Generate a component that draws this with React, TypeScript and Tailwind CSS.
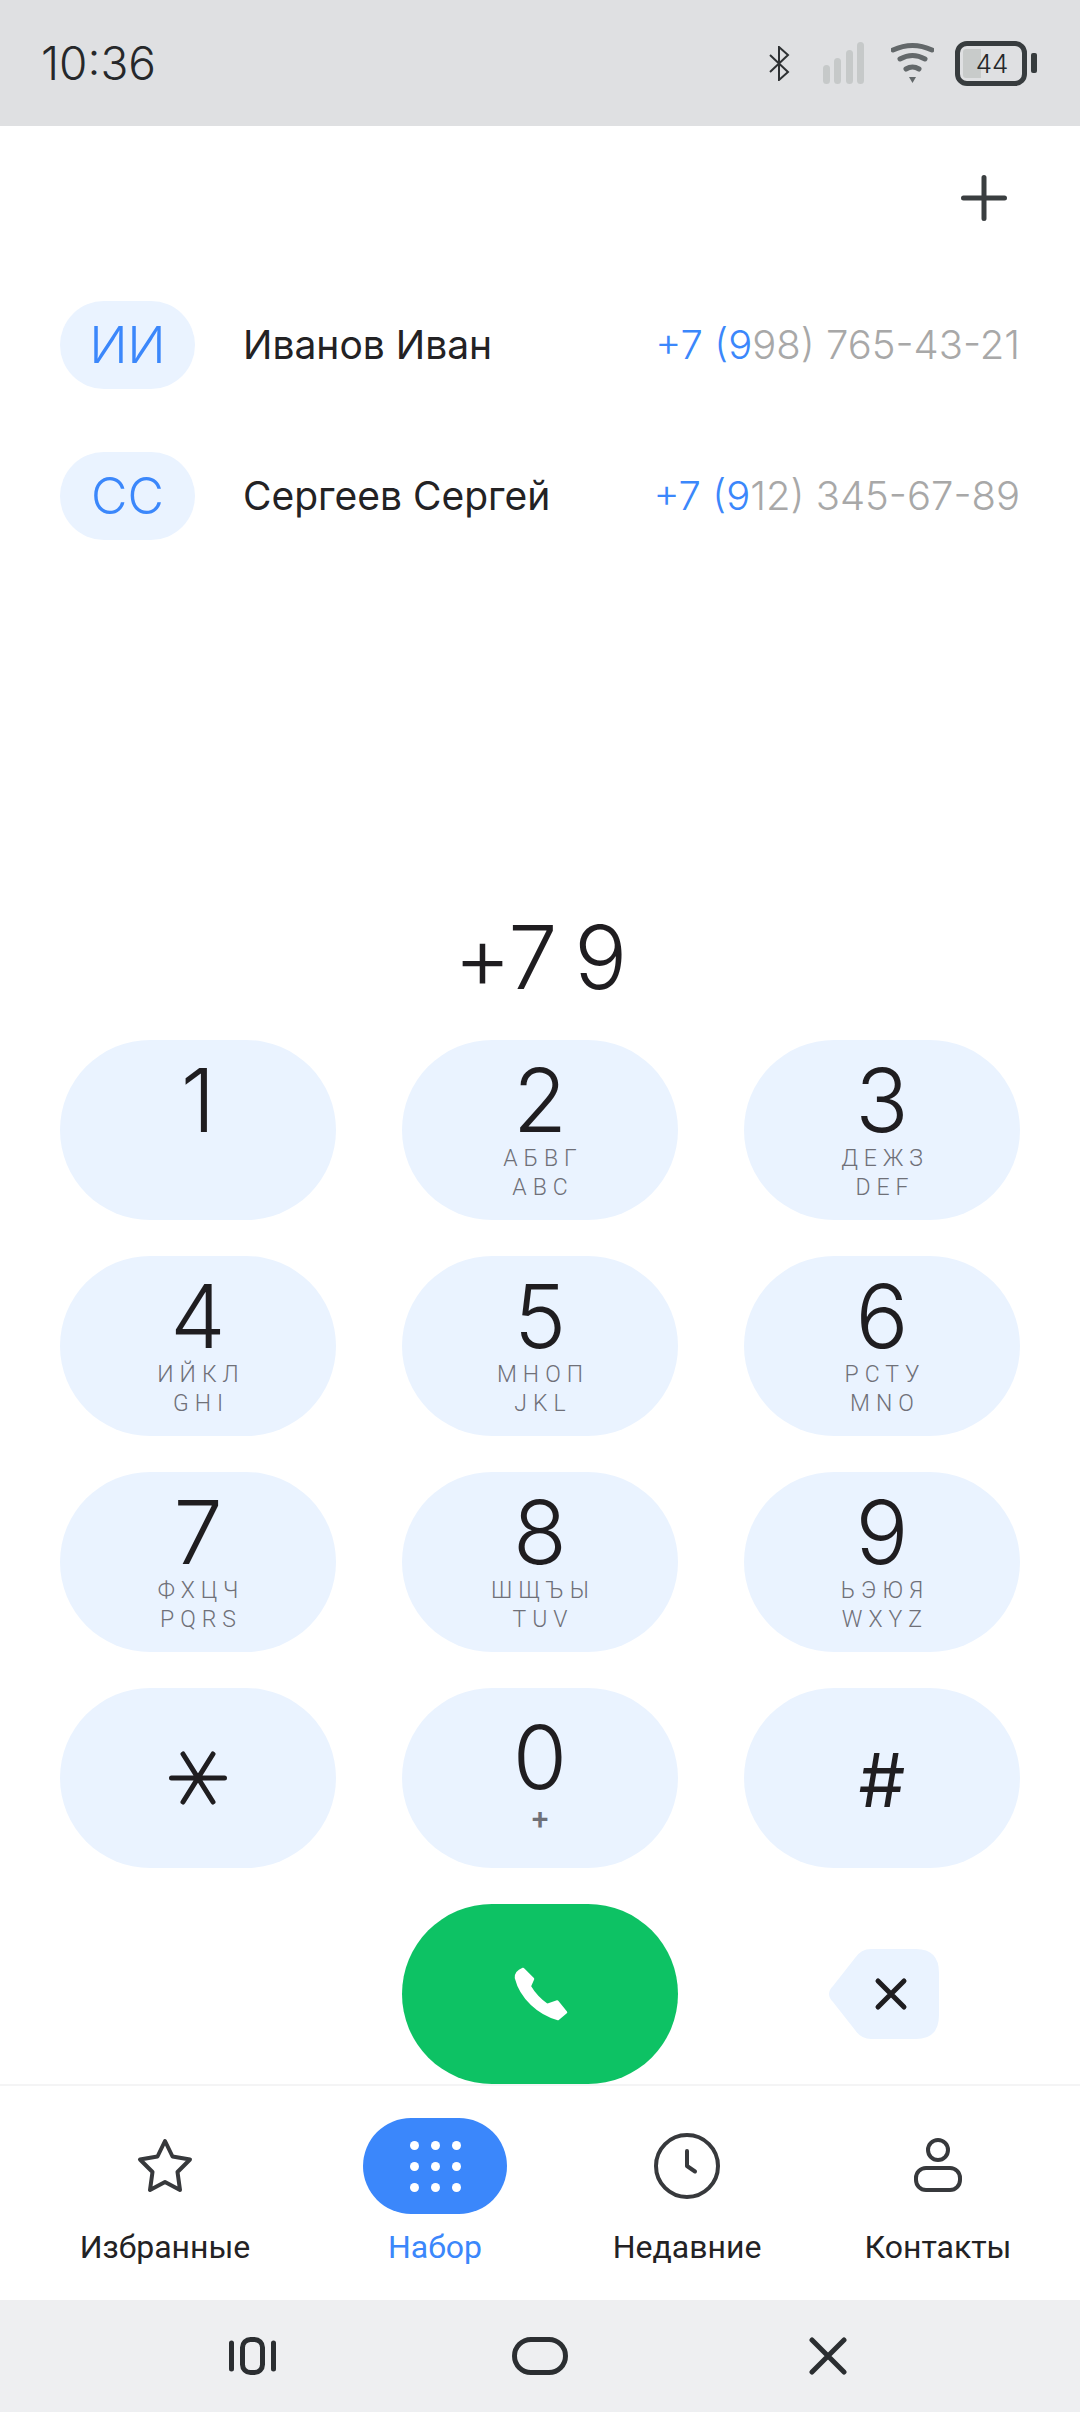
import React from 'react';

const keys = [
  { d: '1', a: '', b: '' },
  { d: '2', a: 'АБВГ', b: 'ABC' },
  { d: '3', a: 'ДЕЖЗ', b: 'DEF' },
  { d: '4', a: 'ИЙКЛ', b: 'GHI' },
  { d: '5', a: 'МНОП', b: 'JKL' },
  { d: '6', a: 'РСТУ', b: 'MNO' },
  { d: '7', a: 'ФХЦЧ', b: 'PQRS' },
  { d: '8', a: 'ШЩЪЫ', b: 'TUV' },
  { d: '9', a: 'ЬЭЮЯ', b: 'WXYZ' },
];

const Key: React.FC<{ d: string; a: string; b: string }> = ({ d, a, b }) => (
  <div className="h-[180px] rounded-[90px] bg-[#eaf3ff] flex flex-col items-center pt-[28px]">
    <div className="font-['Inter',sans-serif] text-[88px] leading-[64px] font-light text-[#1f1d20]">{d}</div>
    {a && <div className="mt-[12px] pl-[6px] text-[23px] leading-[29px] font-light tracking-[6px] text-[#6f7078]">{a}</div>}
    {b && <div className="pl-[6px] text-[23px] leading-[29px] font-light tracking-[6px] text-[#6f7078]">{b}</div>}
  </div>
);

const Contact: React.FC<{ initials: string; name: string; rest: string }> = ({ initials, name, rest }) => (
  <div className="flex items-center h-[88px] font-['Inter',sans-serif]">
    <div className="w-[135px] h-[88px] rounded-[44px] bg-[#eaf3ff] flex items-center justify-center text-[50px] font-light text-[#3b87fb]">
      {initials}
    </div>
    <div className="ml-[48px] text-[39px] text-[#232224]">{name}</div>
    <div className="ml-auto text-[40px] font-light whitespace-nowrap text-[#a8a8a8]">
      <span className="text-[#3b87fb]">+7 (9</span>
      {rest}
    </div>
  </div>
);

const NavItem: React.FC<{ label: string; active?: boolean; children: React.ReactNode }> = ({ label, active, children }) => (
  <div className="flex flex-col items-center">
    <div className={active ? 'w-[144px] h-[96px] rounded-[48px] bg-[#3b87fb] flex items-center justify-center' : 'w-[144px] h-[96px] flex items-center justify-center'}>
      {children}
    </div>
    <div className={active ? 'mt-[11px] text-[32px] leading-[44px] text-[#3b87fb]' : 'mt-[11px] text-[32px] leading-[44px] text-[#232224]'}>{label}</div>
  </div>
);

export default function App() {
  return (
    <div className="w-[1080px] h-[2412px] bg-white flex flex-col overflow-hidden font-['Roboto',sans-serif]">
      {/* status bar */}
      <div className="h-[126px] bg-[#dfe0e2] flex items-center pl-[41px] pr-[43px] shrink-0">
        <div className="font-['Inter',sans-serif] text-[46px] font-light text-[#26282a] leading-none">10:36</div>
        <div className="ml-auto flex items-center">
          <svg width="21" height="35" viewBox="0 0 21 35" fill="none" stroke="#2e3133" strokeWidth="2">
            <path d="M1 9 L19 26 L10 34 V1 L19 9 L1 26" />
          </svg>
          <svg className="ml-[32px]" width="43" height="42" viewBox="0 0 43 42" fill="#c6c9c9">
            <rect x="1" y="23" width="7" height="19" rx="3.5" />
            <rect x="12" y="16" width="7" height="26" rx="3.5" />
            <rect x="24" y="8" width="7" height="34" rx="3.5" />
            <rect x="35" y="0" width="7" height="42" rx="3.5" />
          </svg>
          <svg className="ml-[26px]" width="43" height="42" viewBox="0 0 43 42" fill="none" stroke="#63686a" strokeWidth="5" strokeLinecap="round">
            <path d="M2 8 Q21.5 -1 41 8" />
            <path d="M9 17 Q21.5 10 34 17" />
            <path d="M15 27 Q21.5 23 28 27" />
            <path d="M18 35 H25 L21.5 41 Z" fill="#63686a" stroke="none" />
          </svg>
          <div className="ml-[21px] relative flex items-center">
            <div className="w-[72px] h-[45px] rounded-[12px] border-[5px] border-[#373c3e] p-[3px]">
              <div className="w-[18px] h-full rounded-l-[3px] bg-[#c8cbca]" />
            </div>
            <div className="font-['Inter',sans-serif] absolute left-[21px] top-0 w-[32px] h-[45px] flex items-center justify-center text-[26px] font-light text-[#26282a]">44</div>
            <div className="ml-[4px] w-[6px] h-[20px] rounded-[2px] bg-[#373c3e]" />
          </div>
        </div>
      </div>

      {/* dial area */}
      <div className="flex-1 flex flex-col px-[60px]">
        <div className="mt-[49px] flex justify-end pr-[13px]">
          <svg width="46" height="46" viewBox="0 0 46 46" stroke="#3a3e40" strokeWidth="5" strokeLinecap="round">
            <path d="M23 2.5 V43.5 M2.5 23 H43.5" />
          </svg>
        </div>
        <div className="mt-[80px] flex flex-col gap-[63px]">
          <Contact initials="ИИ" name="Иванов Иван" rest="98) 765-43-21" />
          <Contact initials="СС" name="Сергеев Сергей" rest="12) 345-67-89" />
        </div>
        <div className="font-['Inter',sans-serif] mt-[367px] h-[100px] flex items-center justify-center text-[88px] font-light text-[#1f1d20] leading-none tracking-[-1px] [word-spacing:-6px]">+7 9</div>
        <div className="mt-[33px] grid grid-cols-[276px_276px_276px] gap-x-[66px] gap-y-[36px]">
          {keys.map((k) => (
            <Key key={k.d} {...k} />
          ))}
          <div className="h-[180px] rounded-[90px] bg-[#eaf3ff] flex items-center justify-center">
            <svg width="58" height="54" viewBox="0 0 58 54" stroke="#1f1d20" strokeWidth="5" strokeLinecap="round">
              <path d="M2.5 27 H55.5 M14 3 L44 51 M44 3 L14 51" />
            </svg>
          </div>
          <div className="h-[180px] rounded-[90px] bg-[#eaf3ff] flex flex-col items-center pt-[37px]">
            <div className="font-['Inter',sans-serif] text-[88px] leading-[64px] font-light text-[#1f1d20]">0</div>
            <div className="mt-[15px] text-[30px] leading-[30px] font-medium text-[#6f7078]">+</div>
          </div>
          <div className="font-['Inter',sans-serif] h-[180px] rounded-[90px] bg-[#eaf3ff] flex items-center justify-center pt-[4px] text-[74px] text-[#1f1d20]">#</div>
          <div />
          <div className="h-[180px] rounded-[90px] bg-[#0dc264] flex items-center justify-center pl-[2px]">
            <svg width="60" height="60" viewBox="0 0 60 60" fill="#ffffff" stroke="#ffffff" strokeWidth="2.5" strokeLinejoin="round">
              <path d="M12 5 L22 15 L18.8 22.3 Q25 33 36.2 41 L46.3 37.5 L55 48.3 L47 55 C28 50 10 34 5 14 Q4.5 8 12 5 Z" />
            </svg>
          </div>
          <div className="flex items-center pl-[84px]">
            <svg width="112" height="90" viewBox="0 0 112 90">
              <path d="M27 9 Q33 0 43 0 H88 Q111 0 111 24 V66 Q111 90 88 90 H43 Q33 90 27 81 L5 53 Q-3 45 5 37 Z" fill="#eaf3ff" />
              <path d="M50 32 L76 58 M76 32 L50 58" stroke="#1f1d20" strokeWidth="5" strokeLinecap="round" />
            </svg>
          </div>
        </div>
      </div>

      {/* bottom nav */}
      <div className="h-[216px] shrink-0 border-t-[2px] border-[#f4f4f5] pt-[32px] grid grid-cols-[330px_210px_294px_208px]">
        <NavItem label="Избранные">
          <svg width="60" height="58" viewBox="0 0 60 58" fill="none" stroke="#37393c" strokeWidth="4" strokeLinejoin="round">
            <path d="M30 4 L37.5 19.5 L55 22.5 L42.5 35 L45 53 L30 45 L15 53 L17.5 35 L5 22.5 L22.5 19.5 Z" />
          </svg>
        </NavItem>
        <NavItem label="Набор" active>
          <div className="grid grid-cols-3 gap-x-[12px] gap-y-[12px]">
            {[0, 1, 2, 3, 4, 5, 6, 7, 8].map((i) => (
              <div key={i} className="w-[9px] h-[9px] rounded-full bg-white" />
            ))}
          </div>
        </NavItem>
        <NavItem label="Недавние">
          <svg width="66" height="66" viewBox="0 0 66 66" fill="none" stroke="#37393c" strokeWidth="4" strokeLinecap="round" strokeLinejoin="round">
            <circle cx="33" cy="33" r="31" />
            <path d="M33 18 V33 L41 38.5" />
          </svg>
        </NavItem>
        <NavItem label="Контакты">
          <svg width="48" height="56" viewBox="0 0 48 56" fill="none" stroke="#37393c" strokeWidth="4">
            <circle cx="24" cy="12" r="10" />
            <rect x="2" y="30" width="44" height="22" rx="10" />
          </svg>
        </NavItem>
      </div>

      {/* system nav */}
      <div className="h-[112px] shrink-0 bg-[#eeeff1] relative flex items-center">
        <svg className="ml-[229px]" width="47" height="38" viewBox="0 0 47 38" fill="none" stroke="#2b2e31" strokeWidth="5" strokeLinecap="round">
          <path d="M2.5 6 V32 M44.5 6 V32" />
          <rect x="13.5" y="2.5" width="20" height="33" rx="8" />
        </svg>
        <svg className="ml-[236px]" width="56" height="38" viewBox="0 0 56 38" fill="none" stroke="#2b2e31" strokeWidth="5">
          <rect x="2.5" y="2.5" width="51" height="33" rx="16.5" />
        </svg>
        <svg className="ml-[241px]" width="38" height="38" viewBox="0 0 38 38" stroke="#2b2e31" strokeWidth="5" strokeLinecap="round">
          <path d="M3 3 L35 35 M35 3 L3 35" />
        </svg>
      </div>
    </div>
  );
}
